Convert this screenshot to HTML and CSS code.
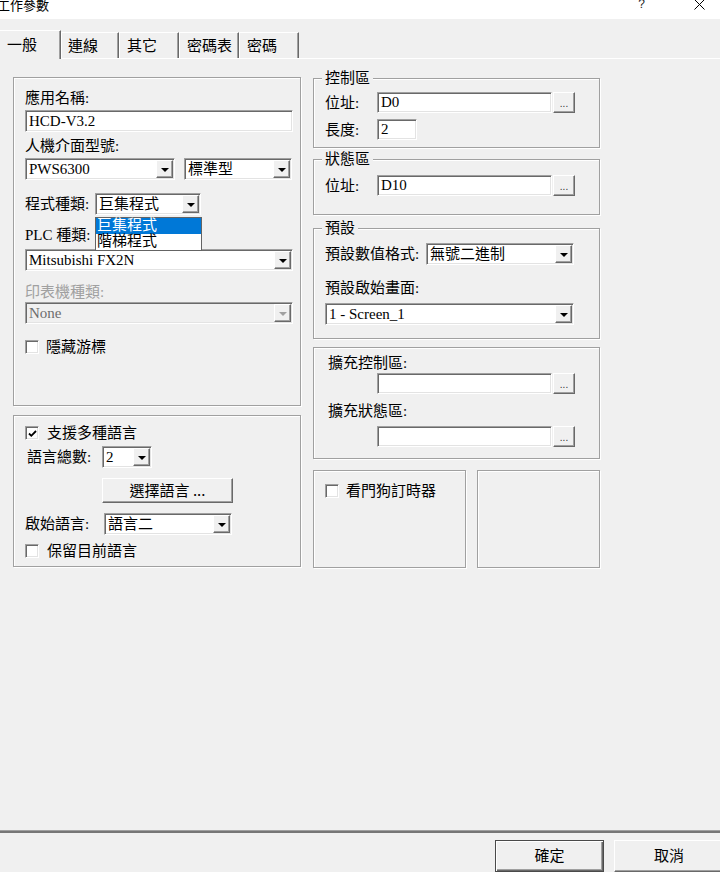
FILE: index.html
```html
<!DOCTYPE html>
<html lang="zh-Hant">
<head>
<meta charset="utf-8">
<title>工作參數</title>
<link rel="stylesheet" href="styles.css">
</head>
<body>
<div class="titlebar">
  <span class="title">工作參數</span>
  <span class="help">?</span>
  <span class="close"><svg width="11" height="11" viewBox="0 0 11 11"><path d="M0.5 0.5L10.5 10.5M10.5 0.5L0.5 10.5" stroke="#000" stroke-width="1" fill="none"/></svg></span>
</div>

<div class="tabs">
  <div class="tab active">一般</div>
  <div class="tab narrow">連線</div>
  <div class="tab">其它</div>
  <div class="tab">密碼表</div>
  <div class="tab">密碼</div>
</div>

<div class="panel">
  <div class="cols">
    <div class="col-left">
      <div class="group g1">
        <div class="lbl">應用名稱:</div>
        <div class="input full mt3">HCD-V3.2</div>
        <div class="lbl mt5">人機介面型號:</div>
        <div class="row mt3">
          <div class="combo w150"><span class="val">PWS6300</span><span class="arrow"></span></div>
          <div class="combo w108 ml9"><span class="val">標準型</span><span class="arrow"></span></div>
        </div>
        <div class="row mt13">
          <span class="lbl w70">程式種類:</span>
          <div class="combo-wrap">
            <div class="combo w106"><span class="val">巨集程式</span><span class="arrow"></span></div>
            <div class="droplist">
              <div class="item sel">巨集程式</div>
              <div class="item">階梯程式</div>
            </div>
          </div>
        </div>
        <div class="lbl mt11">PLC 種類:</div>
        <div class="combo full mt5"><span class="val">Mitsubishi FX2N</span><span class="arrow"></span></div>
        <div class="lbl disabled mt12">印表機種類:</div>
        <div class="combo full off mt1"><span class="val">None</span><span class="arrow"></span></div>
        <div class="check mt14"><span class="box"></span><span class="ctext">隱藏游標</span></div>
      </div>

      <div class="group g2">
        <div class="check"><span class="box"><svg width="11" height="11" viewBox="0 0 11 11"><path d="M2 5.5L4.3 7.8L9 3" stroke="#000" stroke-width="1.8" fill="none"/></svg></span><span class="ctext">支援多種語言</span></div>
        <div class="row mt4">
          <span class="lbl w77 pl2">語言總數:</span>
          <div class="combo w50"><span class="val">2</span><span class="arrow"></span></div>
        </div>
        <div class="btn pick mt10">選擇語言 ...</div>
        <div class="row mt10">
          <span class="lbl w79">啟始語言:</span>
          <div class="combo w128"><span class="val">語言二</span><span class="arrow"></span></div>
        </div>
        <div class="check mt7"><span class="box"></span><span class="ctext">保留目前語言</span></div>
      </div>
    </div>

    <div class="col-right">
      <div class="group legend-box b-ctrl">
        <span class="legend">控制區</span>
        <div class="row">
          <span class="lbl w52">位址:</span>
          <div class="input w175">D0</div>
          <div class="dots">...</div>
        </div>
        <div class="row mt6">
          <span class="lbl w52">長度:</span>
          <div class="input w40">2</div>
        </div>
      </div>

      <div class="group legend-box b-stat">
        <span class="legend">狀態區</span>
        <div class="row">
          <span class="lbl w52">位址:</span>
          <div class="input w175">D10</div>
          <div class="dots">...</div>
        </div>
      </div>

      <div class="group legend-box b-def">
        <span class="legend">預設</span>
        <div class="row">
          <span class="lbl w101">預設數值格式:</span>
          <div class="combo w148"><span class="val">無號二進制</span><span class="arrow"></span></div>
        </div>
        <div class="lbl mt14">預設啟始畫面:</div>
        <div class="combo w249 mt6"><span class="val">1 - Screen_1</span><span class="arrow"></span></div>
      </div>

      <div class="group b-ext">
        <div class="lbl pl3">擴充控制區:</div>
        <div class="row ml52 mt1">
          <div class="input w175"></div>
          <div class="dots">...</div>
        </div>
        <div class="lbl pl3 mt8">擴充狀態區:</div>
        <div class="row ml52 mt6">
          <div class="input w175"></div>
          <div class="dots">...</div>
        </div>
      </div>

      <div class="bottom-row">
        <div class="group b-dog">
          <div class="check"><span class="box"></span><span class="ctext">看門狗訂時器</span></div>
        </div>
        <div class="group b-empty"></div>
      </div>
    </div>
  </div>
</div>

<div class="footer">
  <div class="btn big default">確定</div>
  <div class="btn big">取消</div>
</div>
</body>
</html>
```

FILE: styles.css
```css
* { box-sizing: border-box; }
html, body { margin: 0; padding: 0; }
body {
  width: 720px;
  height: 872px;
  overflow: hidden;
  background: #f0f0f0;
  color: #000;
  font-family: "Liberation Serif", "Noto Sans CJK TC", serif;
  font-size: 15px;
}

/* title bar */
.titlebar {
  height: 19px;
  background: #fff;
  display: flex;
  align-items: flex-start;
  overflow: hidden;
  font-family: "Noto Sans CJK TC", sans-serif;
}
.title { font-size: 13px; line-height: 14px; margin-top: -2px; margin-left: -3px; }
.help { margin-left: auto; font-family: "Liberation Sans", sans-serif; font-size: 12px; line-height: 12px; margin-top: -2px; color: #222; }
.close { margin-left: 49px; margin-right: 15px; margin-top: -1px; display: flex; }

/* tabs */
.tabs {
  display: flex;
  align-items: flex-end;
  height: 28px;
  margin-top: 11px;
  position: relative;
  z-index: 1;
  font-family: "Noto Sans CJK TC", sans-serif;
}
.tab {
  width: 60px;
  height: 26px;
  padding-left: 7px;
  line-height: 24px;
  border-top: 1px solid #fff;
  border-left: 1px solid #fff;
  border-right: 1px solid #696969;
  box-shadow: inset -1px 0 0 #a0a0a0;
  background: #f0f0f0;
}
.tab.narrow { width: 58px; padding-left: 6px; }
.tab.active {
  width: 61px;
  height: 29px;
  margin-bottom: -1px;
  line-height: 25px;
  border-left: none;
}

/* main panel */
.panel {
  height: 773px;
  border-top: 1px solid #fff;
  border-bottom: 1px solid #a0a0a0;
  box-shadow: 0 2px 0 #767676;
  padding: 18px 0 0 13px;
}
.cols { display: flex; gap: 12px; }
.col-left { width: 288px; display: flex; flex-direction: column; gap: 9px; }
.col-right { width: 287px; display: flex; flex-direction: column; padding-top: 1px; }

.group {
  border: 1px solid #a0a0a0;
  box-shadow: inset 1px 1px 0 #fff, 1px 1px 0 #fff;
  position: relative;
}
.g1 { height: 329px; padding: 11px 7px 0 11px; }
.g2 { height: 152px; padding: 8px 7px 0 11px; }

.legend {
  position: absolute;
  top: -10px;
  left: 8px;
  padding: 0 3px;
  line-height: 18px;
  background: #f0f0f0;
}
.legend-box, .b-ext { padding-left: 11px; }
.b-ctrl { height: 70px; padding-top: 13px; }
.b-stat { height: 56px; margin-top: 11px; padding-top: 15px; }
.b-def { height: 111px; margin-top: 13px; padding-top: 14px; }
.b-ext { height: 112px; margin-top: 8px; padding-top: 6px; }
.bottom-row { display: flex; gap: 11px; margin-top: 11px; }
.b-dog { width: 153px; height: 98px; padding: 11px 0 0 11px; }
.b-empty { width: 123px; height: 98px; }

/* generic */
.lbl { line-height: 18px; height: 18px; white-space: nowrap; flex: none; }
.lbl.disabled { color: #a0a0a0; }
.row { display: flex; align-items: center; }
.w40 { width: 40px; } .w50 { width: 50px; } .w52 { width: 52px; }
.w70 { width: 70px; } .w77 { width: 77px; } .w79 { width: 79px; }
.w101 { width: 101px; } .w106 { width: 106px; } .w108 { width: 108px; }
.w128 { width: 128px; } .w148 { width: 148px; } .w150 { width: 150px; }
.w175 { width: 175px; } .w249 { width: 249px; }
.full { width: 268px; }
.mt1 { margin-top: 1px; } .mt3 { margin-top: 3px; } .mt4 { margin-top: 4px; }
.mt5 { margin-top: 5px; } .mt6 { margin-top: 6px; } .mt7 { margin-top: 7px; }
.mt8 { margin-top: 8px; } .mt10 { margin-top: 10px; } .mt11 { margin-top: 11px; }
.mt12 { margin-top: 12px; } .mt13 { margin-top: 13px; } .mt14 { margin-top: 14px; }
.ml9 { margin-left: 9px; } .ml52 { margin-left: 52px; }
.pl2 { padding-left: 2px; } .pl3 { padding-left: 3px; }

/* sunken fields */
.input, .combo {
  height: 22px;
  background: #fff;
  border: 1px solid;
  border-color: #a0a0a0 #fff #fff #a0a0a0;
  box-shadow: inset 1px 1px 0 #696969, inset -1px -1px 0 #e3e3e3;
  line-height: 20px;
  padding-left: 3px;
  white-space: nowrap;
  overflow: hidden;
  flex: none;
}
.col-right .input { height: 21px; line-height: 19px; }
.combo { display: flex; align-items: center; padding: 1px 1px 1px 3px; }
.combo .val { flex: 1; line-height: 18px; overflow: hidden; }
.arrow {
  width: 17px;
  height: 18px;
  flex: none;
  background: #f0f0f0;
  border: 1px solid;
  border-color: #fff #696969 #696969 #fff;
  box-shadow: inset -1px -1px 0 #a0a0a0;
  display: flex;
  align-items: center;
  justify-content: center;
}
.arrow::after {
  content: "";
  border-left: 4px solid transparent;
  border-right: 4px solid transparent;
  border-top: 4px solid #000;
  margin-top: 1px;
}
.combo.off { background: #f0f0f0; color: #6d6d6d; }
.combo.off .arrow::after { border-top-color: #a0a0a0; }

.combo-wrap { position: relative; }
.droplist {
  position: absolute;
  left: 0;
  top: 24px;
  width: 107px;
  background: #fff;
  border: 1px solid #646464;
  z-index: 5;
}
.droplist .item { height: 16px; line-height: 15px; padding-left: 1px; font-size: 15px; }
.droplist .item.sel { background: #0078d7; color: #fff; }

.dots {
  width: 22px;
  height: 21px;
  margin-left: 1px;
  background: #f0f0f0;
  border: 1px solid;
  border-color: #fff #696969 #696969 #fff;
  box-shadow: inset -1px -1px 0 #a0a0a0;
  font-family: "Liberation Sans", sans-serif;
  font-size: 10px;
  line-height: 22px;
  text-align: center;
  color: #333;
}

/* checkboxes */
.check { display: flex; align-items: center; height: 18px; }
.box {
  width: 14px;
  height: 14px;
  flex: none;
  background: #fff;
  border: 1px solid;
  border-color: #a0a0a0 #fff #fff #a0a0a0;
  box-shadow: inset 1px 1px 0 #696969, inset -1px -1px 0 #e3e3e3;
  display: flex;
  align-items: center;
  justify-content: center;
  margin-right: 7px;
}
.g2 .box { margin-right: 8px; }
.ctext { line-height: 18px; }

/* buttons */
.btn {
  background: #f0f0f0;
  border: 1px solid;
  border-color: #fff #696969 #696969 #fff;
  box-shadow: inset -1px -1px 0 #a0a0a0;
  text-align: center;
  font-family: "Noto Sans CJK TC", sans-serif;
}
.pick { width: 131px; height: 25px; line-height: 22px; margin-left: 77px; }

.footer {
  display: flex;
  justify-content: flex-end;
  gap: 10px;
  margin-right: -4px;
  padding-top: 9px;
}
.big { width: 110px; height: 32px; line-height: 28px; }
.default {
  width: 109px;
  border-color: #4a4a4a;
  box-shadow: inset 1px 1px 0 #fff, inset -1px -1px 0 #696969, inset -2px -2px 0 #a0a0a0;
}
```
